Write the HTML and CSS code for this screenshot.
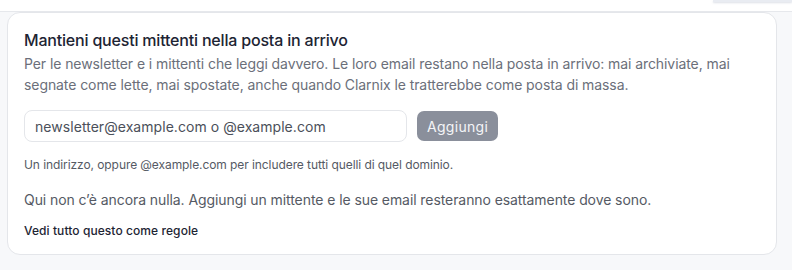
FILE: index.html
```html
<!DOCTYPE html>
<html lang="it">
<head>
    <meta charset="UTF-8">
    <meta name="viewport" content="width=device-width, initial-scale=1.0">
    <title>Mittenti nella posta in arrivo</title>
    <link rel="stylesheet" href="styles.css">
</head>
<body>
    <div class="topbar">
        <div class="topbar-tab"></div>
    </div>
    <main class="panel">
        <section class="card">
            <h2 class="card-title">Mantieni questi mittenti nella posta in arrivo</h2>
            <p class="card-desc">Per le newsletter e i mittenti che leggi davvero. Le loro email restano nella posta in arrivo: mai archiviate, mai segnate come lette, mai spostate, anche quando Clarnix le tratterebbe come posta di massa.</p>
            <form class="add-row" onsubmit="return false">
                <input class="add-input" type="text" placeholder="newsletter@example.com o @example.com">
                <button class="add-btn" type="submit" disabled>Aggiungi</button>
            </form>
            <p class="hint">Un indirizzo, oppure @example.com per includere tutti quelli di quel dominio.</p>
            <p class="empty">Qui non c’è ancora nulla. Aggiungi un mittente e le sue email resteranno esattamente dove sono.</p>
            <a class="rules-link" href="#">Vedi tutto questo come regole</a>
        </section>
    </main>
</body>
</html>
```

FILE: styles.css
```css
html, body {
    height: 100%;
}

body {
    margin: 0;
    background-color: #ffffff;
    font-family: Inter, "Noto Sans", sans-serif;
    color: #1d2433;
    display: flex;
    flex-direction: column;
}

.topbar {
    height: 11px;
    border-bottom: 1px solid #e6e8ec;
    display: flex;
    justify-content: flex-end;
}

.topbar-tab {
    width: 79px;
    height: 2px;
    background-color: #e9ecf2;
    box-shadow: 0 1px 2px rgba(120, 130, 160, 0.25);
}

.panel {
    flex: 1;
    background-color: #f7f8fa;
    padding: 0 15px 11px 7px;
}

.card {
    background-color: #ffffff;
    border: 1px solid #e4e6ea;
    border-radius: 13px;
    padding: 16px 16px 15px 16px;
}

.card-title {
    margin: 0;
    font-size: 16px;
    font-weight: 500;
    line-height: 22px;
    letter-spacing: -0.19px;
    color: #1d2433;
}

.card-desc {
    margin: 2px 0 0;
    font-size: 14px;
    line-height: 21px;
    letter-spacing: -0.08px;
    color: #6b6f7a;
}

.add-row {
    display: flex;
    align-items: center;
    gap: 10px;
    margin-top: 15px;
}

.add-input {
    width: 383px;
    height: 32px;
    box-sizing: border-box;
    border: 1px solid #e4e6ea;
    border-radius: 8px;
    padding: 0 10px;
    font-family: inherit;
    font-size: 14px;
    letter-spacing: 0.05px;
    color: #1d2433;
    outline: none;
}

.add-input::placeholder {
    color: #4b505a;
}

.add-btn {
    height: 30px;
    padding: 0 10px;
    border: none;
    border-radius: 7px;
    background-color: #8a8f9b;
    color: #f4f5f7;
    font-family: inherit;
    font-size: 14px;
    letter-spacing: 0.3px;
}

.hint {
    margin: 15px 0 0;
    font-size: 12px;
    line-height: 16px;
    letter-spacing: -0.08px;
    color: #555a64;
}

.empty {
    margin: 17px 0 0;
    font-size: 14px;
    line-height: 20px;
    letter-spacing: -0.08px;
    color: #555a64;
}

.rules-link {
    display: inline-block;
    margin-top: 13px;
    font-size: 12px;
    font-weight: 500;
    letter-spacing: 0.08px;
    color: #1d2433;
    text-decoration: none;
}
```
